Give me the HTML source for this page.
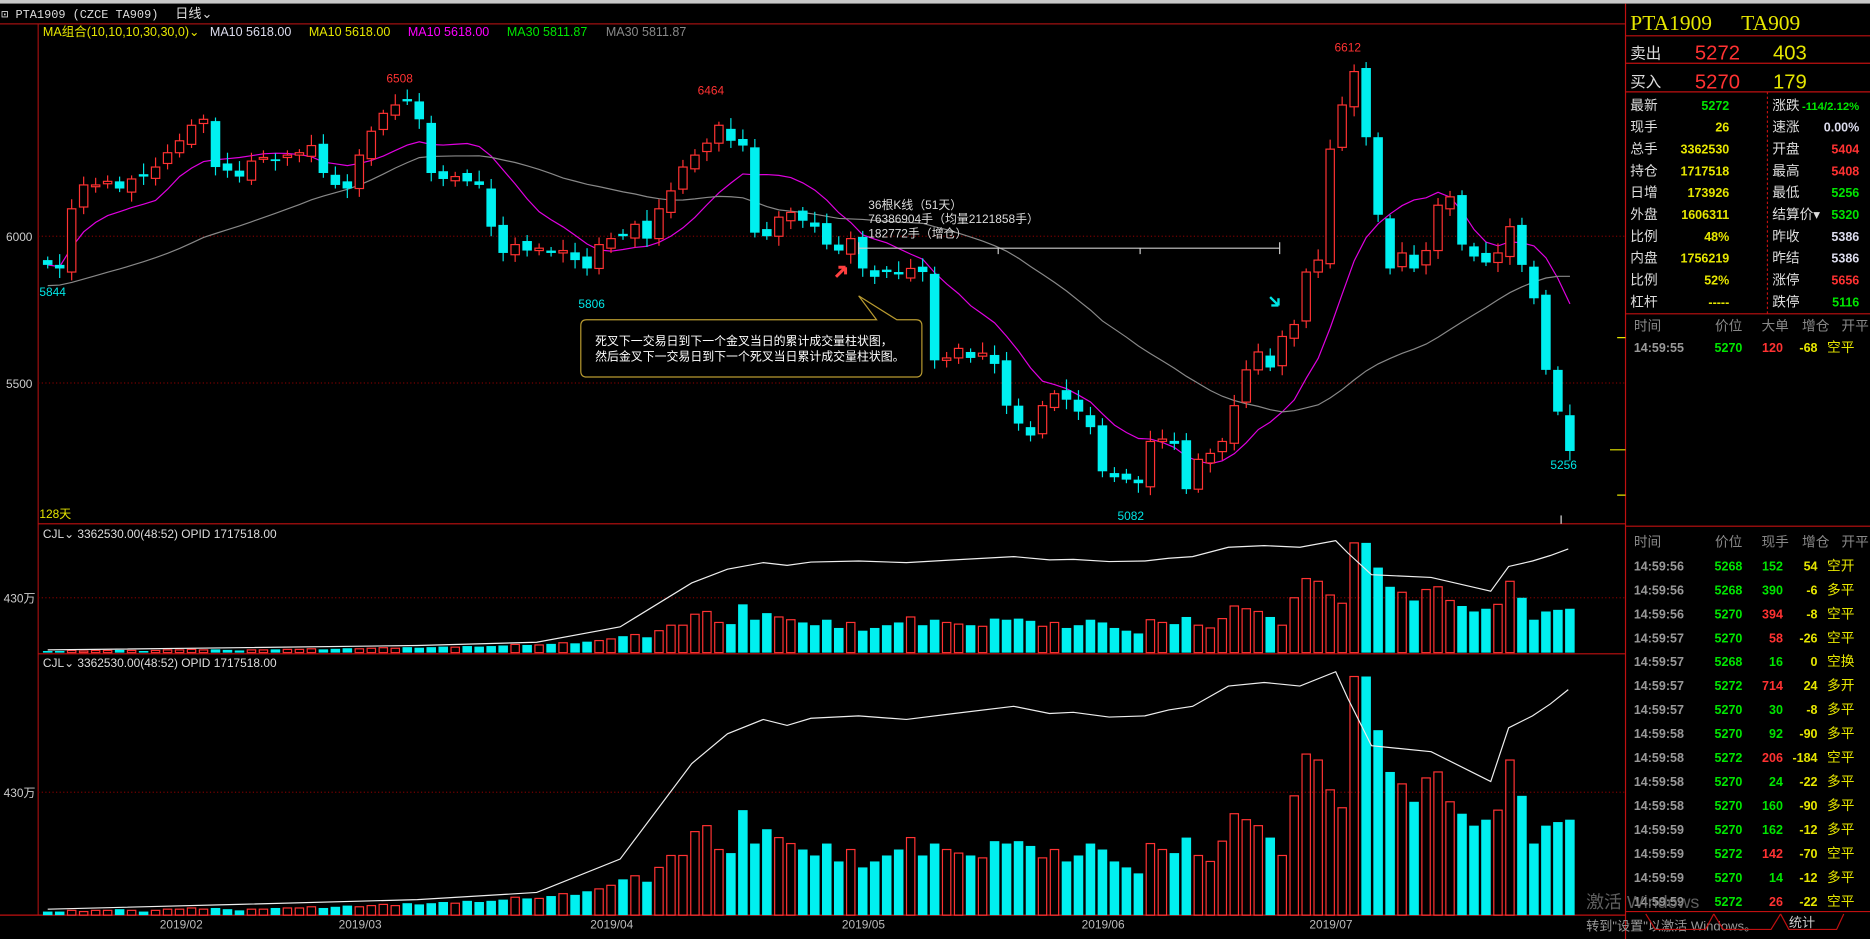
<!DOCTYPE html>
<html><head><meta charset="utf-8"><style>
html,body{margin:0;padding:0;background:#000;overflow:hidden}
svg{display:block}
text{font-family:"Liberation Sans","Noto Sans CJK SC",sans-serif}
text.serif{font-family:"Liberation Serif",serif}
text.mono{font-family:"Liberation Mono",monospace}
</style></head><body>
<svg id="s" xmlns="http://www.w3.org/2000/svg" width="1870" height="939" viewBox="0 0 1568 787" preserveAspectRatio="none">
<rect x="0" y="0" width="1568" height="787" fill="#000"/>
<rect x="0" y="0" width="1568" height="3" fill="#c8c8c8"/>
<text x="1" y="15" font-size="10" fill="#ddd" class="mono">⊡ PTA1909 (CZCE TA909)</text>
<text x="147" y="15" font-size="11" fill="#ddd">日线⌄</text>
<line x1="0" y1="20" x2="1363" y2="20" stroke="#a01010"/>
<line x1="32" y1="20" x2="32" y2="767" stroke="#a01010"/>
<line x1="1363" y1="3" x2="1363" y2="787" stroke="#c01010"/>
<text x="36" y="30" font-size="10.5" fill="#e6e600">MA组合(10,10,10,30,30,0)⌄</text>
<text x="176" y="30" font-size="10.5" fill="#dde">MA10 5618.00</text>
<text x="259" y="30" font-size="10.5" fill="#e6e600">MA10 5618.00</text>
<text x="342" y="30" font-size="10.5" fill="#ff00ff">MA10 5618.00</text>
<text x="425" y="30" font-size="10.5" fill="#00e600">MA30 5811.87</text>
<text x="508" y="30" font-size="10.5" fill="#888">MA30 5811.87</text>
<line x1="32" y1="198" x2="1363" y2="198" stroke="#700" stroke-dasharray="1,2"/>
<line x1="32" y1="321" x2="1363" y2="321" stroke="#700" stroke-dasharray="1,2"/>
<text x="5" y="202" font-size="10" fill="#ccc">6000</text>
<text x="5" y="325" font-size="10" fill="#ccc">5500</text>
<text x="33" y="434" font-size="10" fill="#e6e600">128天</text>
<line x1="32" y1="439" x2="1363" y2="439" stroke="#c01010"/>
<line x1="32" y1="548" x2="1363" y2="548" stroke="#c01010"/>
<line x1="0" y1="767" x2="1363" y2="767" stroke="#c01010"/>
<line x1="32" y1="501" x2="1363" y2="501" stroke="#700" stroke-dasharray="1,2"/>
<line x1="32" y1="664" x2="1363" y2="664" stroke="#700" stroke-dasharray="1,2"/>
<text x="3" y="505" font-size="10" fill="#ccc">430万</text>
<text x="3" y="668" font-size="10" fill="#ccc">430万</text>
<text x="36" y="451" font-size="10" fill="#ddd">CJL⌄   3362530.00(48:52)   OPID 1717518.00</text>
<text x="36" y="559" font-size="10" fill="#ddd">CJL⌄   3362530.00(48:52)   OPID 1717518.00</text>
<g id="ma"></g>
<g id="k"></g>
<g id="v"></g>
<g font-size="10">
<text x="1119" y="43" fill="#ff3232">6612</text>
<text x="324" y="69" fill="#ff3232">6508</text>
<text x="585" y="79" fill="#ff3232">6464</text>
<text x="33" y="248" fill="#00e6e6">5844</text>
<text x="485" y="258" fill="#00e6e6">5806</text>
<text x="937" y="436" fill="#00e6e6">5082</text>
<text x="1300" y="393" fill="#00e6e6">5256</text>
</g>
<g font-size="10" fill="#ddd">
<text x="728" y="175">36根K线（51天）</text>
<text x="728" y="187">76386904手（均量2121858手）</text>
<text x="728" y="199">182772手（增仓）</text>
</g>
<path d="M720 208H1073M720 203V213M837 208V213M956 208V213M1073 203V213" stroke="#ccc" fill="none"/>
<path d="M492 268H735L720 248L752 268H768Q773 268 773 273V311Q773 316 768 316H492Q487 316 487 311V273Q487 268 492 268Z" stroke="#b89a30" fill="#000"/>
<text x="499" y="289" font-size="10" fill="#fff">死叉下一交易日到下一个金叉当日的累计成交量柱状图，</text>
<text x="499" y="302" font-size="10" fill="#fff">然后金叉下一交易日到下一个死叉当日累计成交量柱状图。</text>
<path d="M701 232L709 224M709 224H703M709 224V230" stroke="#ff4040" stroke-width="2.5" fill="none"/>
<path d="M1065 249L1072 256M1072 256H1066M1072 256V250" stroke="#00e6e6" stroke-width="2" fill="none"/>
<path d="M1356 283h7M1350 377h13M1356 415h7" stroke="#e6e600"/>
<line x1="1309" y1="432" x2="1309" y2="439" stroke="#ddd"/>
<g font-size="10" fill="#bbb" text-anchor="middle">
<text x="152" y="778">2019/02</text><text x="302" y="778">2019/03</text><text x="513" y="778">2019/04</text>
<text x="724" y="778">2019/05</text><text x="925" y="778">2019/06</text><text x="1116" y="778">2019/07</text>
</g>
<g stroke="#c01010">
<line x1="1363" y1="30" x2="1568" y2="30"/><line x1="1363" y1="53" x2="1568" y2="53"/>
<line x1="1363" y1="77" x2="1568" y2="77"/><line x1="1363" y1="263" x2="1568" y2="263"/>
<line x1="1363" y1="441" x2="1568" y2="441"/><line x1="1363" y1="764" x2="1568" y2="764"/>
<line x1="1482" y1="77" x2="1482" y2="263" stroke-dasharray="2,2"/>
</g>
<text x="1367" y="25" font-size="18" fill="#e6e600" class="serif">PTA1909</text>
<text x="1460" y="25" font-size="18" fill="#e6e600" class="serif">TA909</text>
<text x="1367" y="49" font-size="13" fill="#ddd">卖出</text>
<text x="1459" y="50" font-size="17" fill="#ff3232" text-anchor="end">5272</text>
<text x="1515" y="50" font-size="17" fill="#e6e600" text-anchor="end">403</text>
<text x="1367" y="73" font-size="13" fill="#ddd">买入</text>
<text x="1459" y="74" font-size="17" fill="#ff3232" text-anchor="end">5270</text>
<text x="1515" y="74" font-size="17" fill="#e6e600" text-anchor="end">179</text>
<g id="rp" font-size="11.5"></g>
<text x="1330" y="761" font-size="15" fill="#777" opacity="0.8">激活 Windows</text>
<text x="1330" y="780" font-size="11" fill="#999">转到"设置"以激活 Windows。</text>
<path d="M1380 766L1388 779H1430L1437 766M1437 766L1445 779H1485L1493 766M1493 766L1500 779H1540L1546 766" stroke="#c01010" fill="none"/>
<text x="1500" y="777" font-size="11" fill="#ccc">统计</text>
</svg>
<script>
var C=[222,225,175,155,155,152,158,150,148,140,128,118,105,100,140,143,148,135,132,135,130,128,122,145,155,158,130,110,95,88,85,100,145,150,148,152,155,190,212,205,210,208,212,210,218,225,205,200,198,188,200,175,160,140,130,120,105,118,122,195,198,182,178,185,190,205,210,200,225,232,228,230,225,228,302,300,292,300,296,305,340,355,365,340,330,335,345,358,395,400,402,405,370,368,372,410,385,380,370,340,310,295,308,282,272,228,218,125,88,60,115,180,225,212,225,210,172,165,205,215,220,212,190,222,250,310,345,378];
var V=[3,3,4,3,4,4,5,4,3,4,5,5,6,5,6,5,4,5,5,6,6,6,7,6,7,8,7,8,9,8,10,9,10,11,10,12,11,12,13,15,14,14,16,18,17,20,22,25,30,33,28,40,50,50,70,75,55,52,88,60,72,65,60,55,50,60,45,55,40,45,50,55,65,50,60,55,52,50,48,62,60,62,58,48,55,45,50,60,55,45,40,35,60,55,52,65,50,45,62,85,80,75,65,50,100,135,130,105,90,200,200,155,120,110,95,115,120,95,85,75,80,88,130,100,60,75,78,80];
var k='',v='',n=C.length,X=function(i){return 40+i*10.05};
for(var i=0;i<n;i++){
 var x=X(i),c=C[i],o=i==0?218:C[i-1]+((i*7)%5-2)*1.5;
 if(Math.abs(o-c)<1.5)o=c+((i%2)?2:-2);
 var up=c<o,t=Math.min(o,c),b=Math.max(o,c),hi=t-(3+(i*13)%7),lo=b+(3+(i*11)%6);
 if(up){k+='<line x1="'+x+'" y1="'+hi+'" x2="'+x+'" y2="'+lo+'" stroke="#ff3232"/><rect x="'+(x-3.5)+'" y="'+t+'" width="7" height="'+(b-t)+'" fill="#000" stroke="#ff3232"/>';}
 else{k+='<line x1="'+x+'" y1="'+hi+'" x2="'+x+'" y2="'+lo+'" stroke="#00e6e6"/><rect x="'+(x-4)+'" y="'+t+'" width="8" height="'+(b-t)+'" fill="#00f0f0"/>';}
 var h2=V[i],h1=V[i]*0.46,col=up?'#ff3232':'#00f0f0';
 if(up){v+='<rect x="'+(x-3.5)+'" y="'+(767-h2)+'" width="7" height="'+h2+'" fill="none" stroke="'+col+'"/><rect x="'+(x-3.5)+'" y="'+(547-h1)+'" width="7" height="'+h1+'" fill="none" stroke="'+col+'"/>';}
 else{v+='<rect x="'+(x-4)+'" y="'+(767-h2)+'" width="8" height="'+h2+'" fill="'+col+'"/><rect x="'+(x-4)+'" y="'+(547-h1)+'" width="8" height="'+h1+'" fill="'+col+'"/>';}
}
var P=[[40,762],[200,758],[350,754],[450,748],[520,720],[580,640],[610,615],[640,603],[660,608],[680,602],[720,600],[760,603],[800,598],[850,592],[880,598],[900,597],[930,601],[960,600],[980,595],[1000,592],[1030,575],[1060,572],[1090,575],[1120,563],[1130,585],[1150,625],[1200,630],[1240,650],[1250,655],[1265,610],[1285,600],[1300,590],[1315,578]];
var p2='',p1='';
P.forEach(function(p,j){p2+=(j?'L':'M')+p[0]+' '+p[1];p1+=(j?'L':'M')+p[0]+' '+(547-(767-p[1])*0.46);});
v+='<path d="'+p2+'" stroke="#eee" fill="none"/><path d="'+p1+'" stroke="#eee" fill="none"/>';
document.getElementById('k').innerHTML=k;
document.getElementById('v').innerHTML=v;
function ma(N,off){var d='';for(var i=0;i<n;i++){var s=0,m=0;for(var j=Math.max(0,i-N+1);j<=i;j++){s+=C[j];m++;}var y=s/m;if(N==30&&i<29)y=(s+(30-m)*(off))/30;d+=(i?'L':'M')+X(i).toFixed(1)+' '+y.toFixed(1);}return d;}
document.getElementById('ma').innerHTML='<path d="'+ma(10,0)+'" stroke="#e000e0" fill="none"/><path d="'+ma(30,240)+'" stroke="#888" fill="none"/>';
var L=[['最新','5272','#00e600','涨跌','-114/2.12%','#00e600'],['现手','26','#e6e600','速涨','0.00%','#dde'],['总手','3362530','#e6e600','开盘','5404','#ff3232'],['持仓','1717518','#e6e600','最高','5408','#ff3232'],['日增','173926','#e6e600','最低','5256','#00e600'],['外盘','1606311','#e6e600','结算价▾','5320','#00e600'],['比例','48%','#e6e600','昨收','5386','#dde'],['内盘','1756219','#e6e600','昨结','5386','#dde'],['比例','52%','#e6e600','涨停','5656','#ff3232'],['杠杆','-----','#e6e600','跌停','5116','#00e600']];
var r='';
L.forEach(function(a,j){var y=92+j*18.3;r+='<text x="1367" y="'+y+'" fill="#ddd">'+a[0]+'</text><text x="1450" y="'+y+'" fill="'+a[2]+'" text-anchor="end" font-weight="bold" font-size="10.5">'+a[1]+'</text><text x="1486" y="'+y+'" fill="#ddd">'+a[3]+'</text><text x="1559" y="'+y+'" fill="'+a[5]+'" text-anchor="end" font-weight="bold" font-size="'+(j==0?9.5:10.5)+'">'+a[4]+'</text>';});
function hdr(y,t){return '<text x="1370" y="'+y+'" fill="#888">时间</text><text x="1438" y="'+y+'" fill="#888">价位</text><text x="1477" y="'+y+'" fill="#888">'+t+'</text><text x="1511" y="'+y+'" fill="#888">增仓</text><text x="1544" y="'+y+'" fill="#888">开平</text>';}
function row(y,t,p,q,qc,z,f){return '<text x="1370" y="'+y+'" fill="#999" font-weight="bold" font-size="10.5">'+t+'</text><text x="1461" y="'+y+'" fill="#00e600" text-anchor="end" font-weight="bold" font-size="10.5">'+p+'</text><text x="1495" y="'+y+'" fill="'+qc+'" text-anchor="end" font-weight="bold" font-size="10.5">'+q+'</text><text x="1524" y="'+y+'" fill="#e6e600" text-anchor="end" font-weight="bold" font-size="10.5">'+z+'</text><text x="1532" y="'+y+'" fill="#e6e600">'+f+'</text>';}
r+=hdr(277,'大单')+row(295,'14:59:55','5270','120','#ff3232','-68','空平');
r+=hdr(458,'现手');
var T=[['14:59:56','5268','152','g','54','空开'],['14:59:56','5268','390','g','-6','多平'],['14:59:56','5270','394','r','-8','空平'],['14:59:57','5270','58','r','-26','空平'],['14:59:57','5268','16','g','0','空换'],['14:59:57','5272','714','r','24','多开'],['14:59:57','5270','30','g','-8','多平'],['14:59:58','5270','92','g','-90','多平'],['14:59:58','5272','206','r','-184','空平'],['14:59:58','5270','24','g','-22','多平'],['14:59:58','5270','160','g','-90','多平'],['14:59:59','5270','162','g','-12','多平'],['14:59:59','5272','142','r','-70','空平'],['14:59:59','5270','14','g','-12','多平'],['14:59:59','5272','26','r','-22','空平']];
T.forEach(function(a,j){r+=row(478+j*20.1,a[0],a[1],a[2],a[3]=='g'?'#00e600':'#ff3232',a[4],a[5]);});
document.getElementById('rp').innerHTML=r;
</script>
</body></html>
